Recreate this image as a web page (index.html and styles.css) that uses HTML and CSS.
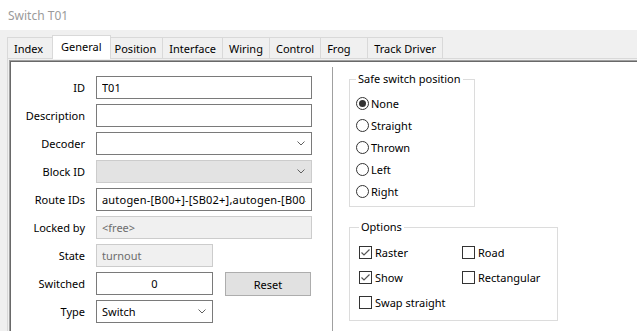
FILE: index.html
```html
<!doctype html>
<html>
    <head>
        <title>Switch T01</title>
        <link rel="stylesheet" href="styles.css">
    </head>
    <body>
        <div class="titlebar">Switch T01</div>

        <div class="window">
            <div class="tabs">
                <div class="tab">Index</div>
                <div class="tab active">General</div>
                <div class="tab">Position</div>
                <div class="tab">Interface</div>
                <div class="tab">Wiring</div>
                <div class="tab">Control</div>
                <div class="tab">Frog</div>
                <div class="tab">Track Driver</div>
            </div>

            <div class="page">
                <div class="panel">
                    <!-- left: the switch properties -->
                    <div class="form">
                        <label class="lbl">ID</label>
                        <div class="field"><input class="edit" value="T01"></div>

                        <label class="lbl">Description</label>
                        <div class="field"><input class="edit" value=""></div>

                        <label class="lbl">Decoder</label>
                        <div class="field"><div class="combo"><span></span><svg class="chev" width="8" height="5" viewBox="0 0 8 5"><polyline points="0.5,0.5 4,4 7.5,0.5" /></svg></div></div>

                        <label class="lbl">Block ID</label>
                        <div class="field"><div class="combo off"><span></span><svg class="chev" width="8" height="5" viewBox="0 0 8 5"><polyline points="0.5,0.5 4,4 7.5,0.5" /></svg></div></div>

                        <label class="lbl">Route IDs</label>
                        <div class="field"><input class="edit wide" value="autogen-[B00+]-[SB02+],autogen-[B00-]-[SB01-]"></div>

                        <label class="lbl">Locked by</label>
                        <div class="field"><input class="edit off" value="&lt;free&gt;" disabled></div>

                        <label class="lbl">State</label>
                        <div class="field"><input class="edit off short" value="turnout" disabled></div>

                        <label class="lbl">Switched</label>
                        <div class="field">
                            <input class="edit short center" value="0">
                            <button class="btn">Reset</button>
                        </div>

                        <label class="lbl">Type</label>
                        <div class="field"><div class="combo short"><span>Switch</span><svg class="chev" width="8" height="5" viewBox="0 0 8 5"><polyline points="0.5,0.5 4,4 7.5,0.5" /></svg></div></div>
                    </div>

                    <!-- right: position and options -->
                    <div class="side">
                        <fieldset class="group safe">
                            <legend>Safe switch position</legend>
                            <div class="opt"><span class="radio on"></span>None</div>
                            <div class="opt"><span class="radio"></span>Straight</div>
                            <div class="opt"><span class="radio"></span>Thrown</div>
                            <div class="opt"><span class="radio"></span>Left</div>
                            <div class="opt"><span class="radio"></span>Right</div>
                        </fieldset>

                        <fieldset class="group options">
                            <legend>Options</legend>
                            <div class="opt"><span class="check on"><svg width="11" height="11" viewBox="0 0 11 11"><polyline points="1.5,5.5 4,8 9.5,2.5" /></svg></span>Raster</div>
                            <div class="opt"><span class="check"></span>Road</div>
                            <div class="opt"><span class="check on"><svg width="11" height="11" viewBox="0 0 11 11"><polyline points="1.5,5.5 4,8 9.5,2.5" /></svg></span>Show</div>
                            <div class="opt"><span class="check"></span>Rectangular</div>
                            <div class="opt"><span class="check"></span>Swap straight</div>
                        </fieldset>
                    </div>
                </div>
            </div>
        </div>
    </body>
</html>
```

FILE: styles.css
```css
body {
    margin: 0;
    padding: 0;
    width: 637px;
    height: 331px;
    overflow: hidden;
    font-family: 'Noto Sans', 'Liberation Sans', Arial, sans-serif;
    font-size: 11px;
    color: #000;
    background-color: #f0f0f0;
    display: flex;
    flex-direction: column;
}

.titlebar {
    height: 30px;
    flex: none;
    background-color: #fff;
    color: #9a9a9a;
    font-size: 12px;
    padding-left: 8px;
    display: flex;
    align-items: center;
    box-sizing: border-box;
}

.window {
    flex: 1;
    display: flex;
    flex-direction: column;
    min-height: 0;
}

/* Tab strip */
.tabs {
    display: flex;
    align-items: flex-end;
    height: 23px;
    margin-top: 5px;
    padding-left: 8px;
    flex: none;
}

.tab {
    height: 21px;
    min-width: 48px;
    box-sizing: border-box;
    padding: 1px 6px 0 6px;
    margin-left: -1px;
    border: 1px solid #d9d9d9;
    border-bottom: none;
    display: flex;
    align-items: center;
}

.tab.active {
    height: 24px;
    background-color: #fff;
    margin: 0 -2px -1px -3px;
    padding: 0 8px 2px 8px;
    position: relative;
    z-index: 1;
}

.page {
    flex: 1;
    border-top: 1px solid #d9d9d9;
    border-left: 1px solid #d9d9d9;
    margin-left: 7px;
    padding: 1px 0 0 1px;
    min-height: 0;
    display: flex;
}

.panel {
    flex: 1;
    background-color: #fff;
    border-top: 1px solid #a0a0a0;
    border-left: 1px solid #a0a0a0;
    box-shadow: inset 1px 1px 0 #696969;
    padding: 1px 0 0 1px;
    display: flex;
}

/* Left form */
.form {
    width: 321px;
    flex: none;
    box-sizing: border-box;
    padding-top: 14px;
    display: grid;
    grid-template-columns: 74px 216px;
    grid-auto-rows: 23px;
    column-gap: 11px;
    row-gap: 5px;
    align-content: start;
    align-items: center;
}

.lbl {
    text-align: right;
    white-space: nowrap;
}

.field {
    display: flex;
    height: 23px;
}

.edit {
    width: 100%;
    height: 23px;
    box-sizing: border-box;
    border: 1px solid #7a7a7a;
    padding: 0 5px;
    font: inherit;
    color: #000;
    background-color: #fff;
    outline: none;
}

.edit.wide {
    letter-spacing: 0.2px;
}

.edit.off {
    border-color: #cccccc;
    background-color: #f0f0f0;
    color: #6d6d6d;
}

.short {
    width: 117px;
    flex: none;
}

.center {
    text-align: center;
}

.combo {
    width: 100%;
    height: 23px;
    box-sizing: border-box;
    border: 1px solid #7a7a7a;
    background-color: #fff;
    padding: 0 6px 0 5px;
    display: flex;
    align-items: center;
    justify-content: space-between;
}

.combo.short {
    width: 117px;
}

.combo.off {
    border-color: #cccccc;
    background-color: #e3e3e3;
}

.chev polyline {
    fill: none;
    stroke: #606060;
    stroke-width: 1;
}

.btn {
    width: 86px;
    height: 24px;
    margin-left: 12px;
    box-sizing: border-box;
    border: 1px solid #adadad;
    background-color: #e1e1e1;
    font: inherit;
    color: #000;
    padding: 0;
}

/* Right side */
.side {
    flex: 1;
    margin-top: 5px;
    border-left: 1px solid #a0a0a0;
    padding: 4px 0 0 16px;
}

.group {
    margin: 0;
    border: 1px solid #dcdcdc;
    padding: 0 0 0 6px;
    box-sizing: border-box;
}

.group legend {
    padding: 0 2px;
    line-height: 16px;
}

.safe {
    width: 126px;
    padding-top: 5px;
    padding-bottom: 4px;
}

.safe .opt {
    height: 22px;
}

.options {
    width: 209px;
    margin-top: 12px;
    padding: 5px 0 5px 9px;
    display: grid;
    grid-template-columns: 103px 1fr;
    grid-auto-rows: 25px;
}

.opt {
    display: flex;
    align-items: center;
    white-space: nowrap;
}

.radio {
    width: 13px;
    height: 13px;
    box-sizing: border-box;
    border: 1px solid #333;
    border-radius: 50%;
    margin-right: 2px;
    display: flex;
    align-items: center;
    justify-content: center;
}

.radio.on::after {
    content: '';
    width: 7px;
    height: 7px;
    border-radius: 50%;
    background-color: #333;
}

.check {
    width: 13px;
    height: 13px;
    box-sizing: border-box;
    border: 1px solid #333;
    margin-right: 3px;
    display: flex;
    align-items: center;
    justify-content: center;
}

.check svg polyline {
    fill: none;
    stroke: #555;
    stroke-width: 1.2;
}
```
